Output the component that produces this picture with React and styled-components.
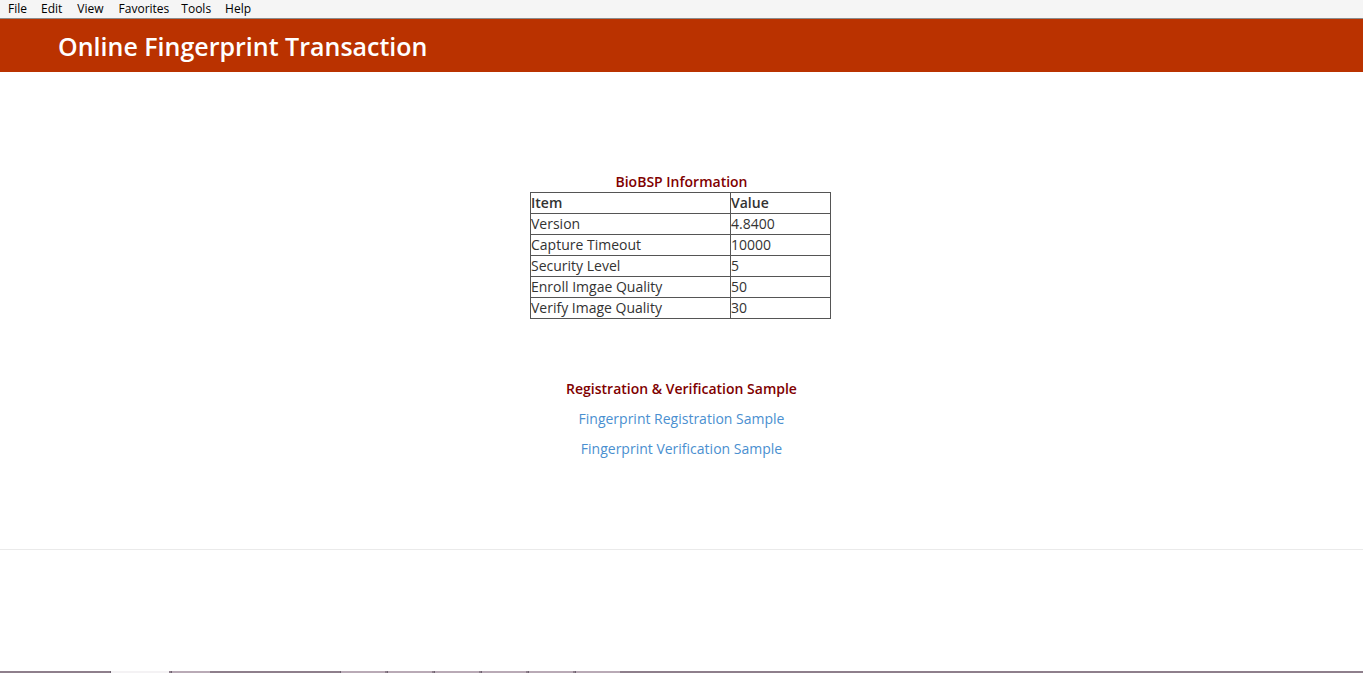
import styled, { createGlobalStyle } from "styled-components"

const GlobalStyle = createGlobalStyle`
    html, body {
        margin: 0;
        padding: 0;
        background: #fff;
        font-family: "Open Sans", "Noto Sans", sans-serif;
        color: #333;
    }
`

const Page = styled.div`
    display: flex;
    flex-direction: column;
    height: 673px;
    overflow: hidden;
`

const MenuBar = styled.div`
    display: flex;
    align-items: center;
    height: 18px;
    padding-left: 1px;
    background: #f5f5f5;
    border-bottom: 1px solid #8c8c8c;
    font-size: 12px;
    color: #000;
`

const MenuItem = styled.span`
    padding: 0 7px;
    line-height: 18px;
    margin-right: ${(p) => p.$extra || 0}px;
`

const Header = styled.header`
    height: 53px;
    background: #ba3200;
    display: flex;
    align-items: center;
    padding-left: 58px;
`

const Title = styled.h1`
    margin: 0;
    font-size: 25px;
    font-weight: 600;
    color: #fff;
`

const Main = styled.main`
    display: flex;
    flex-direction: column;
    align-items: center;
    padding-top: 100px;
    height: 377px;
    border-bottom: 1px solid #eaeaea;
`

const SectionTitle = styled.div`
    font-size: 14px;
    font-weight: 600;
    color: #800000;
    line-height: 20px;
    text-align: center;
`

const InfoTable = styled.table`
    border-collapse: collapse;
    width: 301px;
    font-size: 14px;
    color: #333;
    margin-right: 2px;
`

const Cell = styled.td`
    border: 1px solid #555;
    padding: 0;
    height: 20px;
    line-height: 20px;
    width: ${(p) => (p.$wide ? "199px" : "auto")};
    font-weight: ${(p) => (p.$head ? 600 : 400)};
`

const Samples = styled.div`
    display: flex;
    flex-direction: column;
    align-items: center;
    margin-top: 60px;
    gap: 10px;
`

const SampleLink = styled.a`
    font-size: 14px;
    line-height: 20px;
    color: #4a8fd0;
    text-decoration: none;
`

const Spacer = styled.div`
    flex: 1;
`

const Taskbar = styled.div`
    height: 2px;
    display: flex;
    background: #8e7f8c;
`

const TaskTab = styled.div`
    width: ${(p) => p.$w}px;
    margin-left: ${(p) => p.$ml}px;
    background: ${(p) => (p.$active ? "#f4f2f4" : "#b9aab6")};
    border-left: 1px solid #6e6270;
`

const menus = [
    ["File", 0],
    ["Edit", 1],
    ["View", 1],
    ["Favorites", -2],
    ["Tools", 0],
    ["Help", 0],
]

const rows = [
    ["Version", "4.8400"],
    ["Capture Timeout", "10000"],
    ["Security Level", "5"],
    ["Enroll Imgae Quality", "50"],
    ["Verify Image Quality", "30"],
]

const tabs = [
    { ml: 110, w: 58, active: true },
    { ml: 2, w: 38 },
    { ml: 130, w: 44 },
    { ml: 2, w: 44 },
    { ml: 2, w: 44 },
    { ml: 2, w: 44 },
    { ml: 2, w: 44 },
    { ml: 2, w: 44 },
]

const App = () => {
    return (
        <Page>
            <GlobalStyle />
            <MenuBar>
                {menus.map(([m, extra]) => (
                    <MenuItem key={m} $extra={extra}>{m}</MenuItem>
                ))}
            </MenuBar>
            <Header>
                <Title>Online Fingerprint Transaction</Title>
            </Header>
            <Main>
                <SectionTitle>BioBSP Information</SectionTitle>
                <InfoTable>
                    <tbody>
                        <tr>
                            <Cell $wide $head>Item</Cell>
                            <Cell $head>Value</Cell>
                        </tr>
                        {rows.map(([k, v]) => (
                            <tr key={k}>
                                <Cell $wide>{k}</Cell>
                                <Cell>{v}</Cell>
                            </tr>
                        ))}
                    </tbody>
                </InfoTable>
                <Samples>
                    <SectionTitle>Registration &amp; Verification Sample</SectionTitle>
                    <SampleLink href="#">Fingerprint Registration Sample</SampleLink>
                    <SampleLink href="#">Fingerprint Verification Sample</SampleLink>
                </Samples>
            </Main>
            <Spacer />
            <Taskbar>
                {tabs.map((t, i) => (
                    <TaskTab key={i} $w={t.w} $ml={t.ml} $active={t.active} />
                ))}
            </Taskbar>
        </Page>
    )
}

export default App
